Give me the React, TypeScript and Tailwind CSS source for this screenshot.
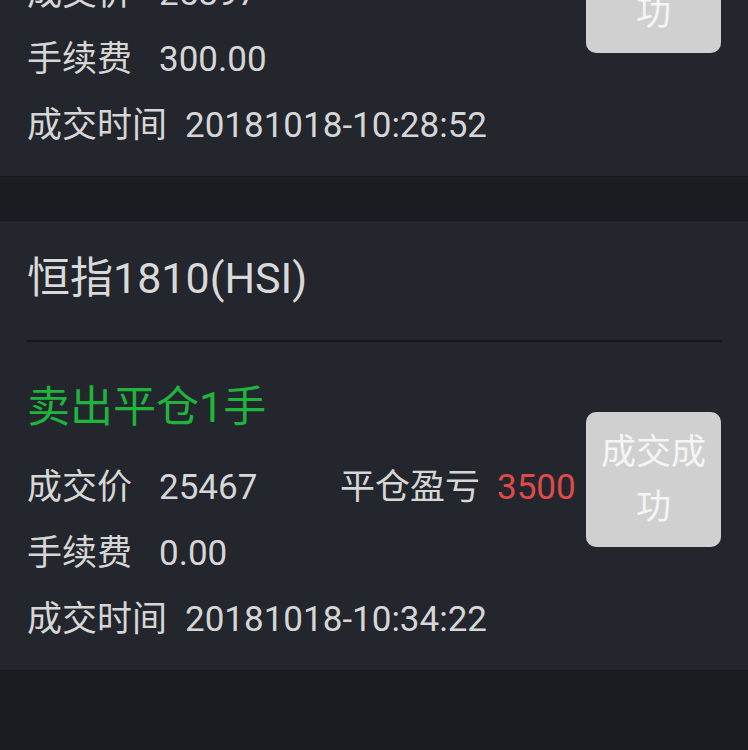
type Row = { label: string; value: string; gap: string };

type Trade = {
  title: string;
  action: string;
  actionColor: string;
  price: string;
  fee: string;
  time: string;
  pnl?: string;
};

const trades: Trade[] = [
  {
    title: "恒指1810(HSI)",
    action: "买入开仓1手",
    actionColor: "text-[#e04a4a]",
    price: "25897",
    fee: "300.00",
    time: "20181018-10:28:52",
  },
  {
    title: "恒指1810(HSI)",
    action: "卖出平仓1手",
    actionColor: "text-[#1fb43c]",
    price: "25467",
    fee: "0.00",
    time: "20181018-10:34:22",
    pnl: "3500",
  },
];

const InfoRow = ({ label, value, gap }: Row) => (
  <div className="flex items-center">
    <span>{label}</span>
    <span className={gap}>{value}</span>
  </div>
);

const TradeCard = ({ trade }: { trade: Trade }) => {
  return (
    <div className="bg-[#23262d] px-[27px] border-y border-[#16181d]">
      <div className="h-[119px] flex items-center pb-[4px]">
        <h3 className="text-[43px] leading-none text-[#d9d9d9]">{trade.title}</h3>
      </div>
      <div className="h-[2px] bg-[#15171b]" />
      <div className="flex pt-[34px] pb-[17px]">
        <div className="flex-1 text-[35px] text-[#d6d6d6]">
          <div className={`h-[62px] mb-[17px] flex items-center text-[43px] ${trade.actionColor}`}>
            {trade.action}
          </div>
          <div className="h-[66px] flex items-center">
            <div className="w-[313px]">
              <InfoRow label="成交价" value={trade.price} gap="ml-[27px]" />
            </div>
            {trade.pnl && (
              <div className="flex items-center">
                <span>平仓盈亏</span>
                <span className="ml-[17px] text-[#e04a4a]">{trade.pnl}</span>
              </div>
            )}
          </div>
          <div className="h-[66px] flex items-center">
            <InfoRow label="手续费" value={trade.fee} gap="ml-[27px]" />
          </div>
          <div className="h-[66px] flex items-center">
            <InfoRow label="成交时间" value={trade.time} gap="ml-[18px]" />
          </div>
        </div>
        <div className="mt-[36px] self-start shrink-0 w-[135px] h-[135px] rounded-[10px] bg-[#d0d0d0] px-[12px] flex items-center justify-center text-center text-[35px] leading-[55px] text-[#f5f5f5]">
          成交成功
        </div>
      </div>
    </div>
  );
};

export default function App() {
  return (
    <div
      className="w-[748px] h-[750px] overflow-hidden bg-[#1a1c22]"
      style={{ fontFamily: 'Roboto, "Noto Sans CJK SC", sans-serif' }}
    >
      <div className="-mt-[274px] flex flex-col gap-[43px]">
        {trades.map((t, i) => (
          <TradeCard key={i} trade={t} />
        ))}
      </div>
    </div>
  );
}
